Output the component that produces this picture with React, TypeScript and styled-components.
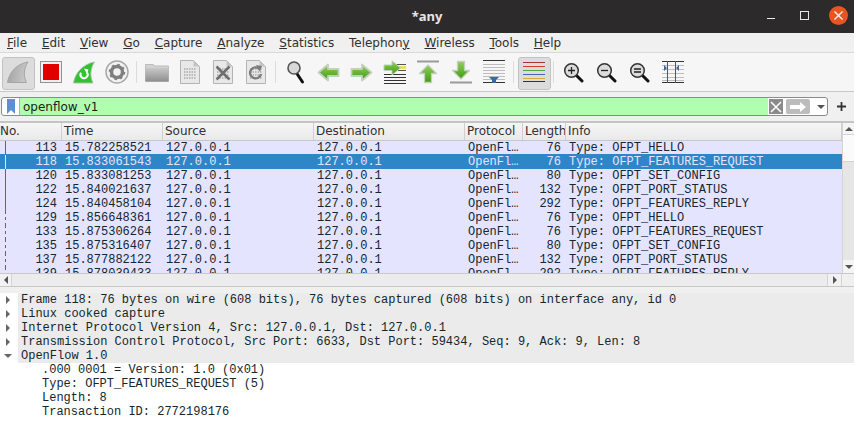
import React from "react";
import styled, { createGlobalStyle } from "styled-components";

const Global = createGlobalStyle`
  html, body { margin: 0; padding: 0; background: #fff; }
  * { box-sizing: border-box; }
`;

const UI = `"DejaVu Sans", sans-serif`;
const MONO = `"Liberation Mono", monospace`;
const COLS = "62px 101px 151px 151px 58px 43px 1fr";

const Win = styled.div`
  width: 854px; height: 441px; display: flex; flex-direction: column; overflow: hidden;
  font-family: ${UI}; color: #2e3436; background: #fff;
`;
const TitleBar = styled.div`
  height: 33px; flex: none; background: #2c2a2a; display: flex; align-items: center;
  justify-content: flex-end; padding: 0 5px 3px 0; gap: 13px; position: relative;
`;
const Title = styled.div`
  position: absolute; left: 0; right: 0; top: 7px; text-align: center;
  font: bold 13px "Noto Sans", "Open Sans", sans-serif; color: #e6e6e6;
`;
const WinBtn = styled.div`
  width: 21px; height: 21px; display: flex; align-items: center; justify-content: center;
`;
const MenuBar = styled.div`
  height: 20px; flex: none; background: #f0f0f0; border-bottom: 1px solid #d9d9d9;
  display: flex; padding: 0 0 0 7px; gap: 14.8px; align-items: center; font-size: 12px; color: #303030;
`;
const MenuItem = styled.span`white-space: nowrap;`;
const Mn = styled.span`text-decoration: underline;`;
const Toolbar = styled.div`
  height: 39px; flex: none; background: #f6f6f6; border-bottom: 1px solid #c8c8c8;
  display: flex; align-items: center; padding: 0 0 0 1px;
`;
const ToolBtn = styled.div<{ $on?: boolean }>`
  width: 33px; height: 33px; flex: none; display: flex; align-items: center; justify-content: center;
  position: relative;
  ${(p) => p.$on && `
    &::before { content: ""; position: absolute; left: 1px; top: 1px; width: 31px; height: 31px;
      background: #dcdcdc; border: 1px solid #c2c2c2; border-radius: 3px; }
  `}
  & > svg { position: relative; }
`;
const ToolSep = styled.div`
  width: 7px; height: 22px; flex: none; display: flex; justify-content: center;
  &::before { content: ""; width: 1px; background: #dcdcdc; }
`;
const FilterBar = styled.div`
  height: 29px; flex: none; background: #f0f0f0; display: flex; align-items: flex-start; padding: 5px 0 0 1px;
`;
const FilterBox = styled.div`
  width: 827px; height: 19px; flex: none; background: #fff; border: 1px solid #8a8a8a; border-radius: 3px;
  display: flex; align-items: stretch; overflow: hidden;
`;
const Bookmark = styled.div`
  width: 18px; flex: none; display: flex; align-items: center; justify-content: center; border-right: 1px solid #a9b9a9;
`;
const FilterText = styled.div`
  flex: 1; background: #afffaf; font: 12px ${UI}; color: #1c1c1c; line-height: 18px; padding-left: 3px;
`;
const ClearBtn = styled.div`
  width: 14px; height: 15px; margin: 1px 0 0 1px; background: #8b8b8b; flex: none;
  display: flex; align-items: center; justify-content: center;
`;
const ApplyBtn = styled.div`
  width: 24px; height: 15px; margin: 1px 0 0 3px; background: #bcbcbc; border-radius: 2px; flex: none;
  display: flex; align-items: center; justify-content: center;
`;
const DropBtn = styled.div`
  width: 17px; flex: none; display: flex; align-items: center; justify-content: flex-start; padding-left: 7px;
`;
const PlusBtn = styled.div`
  width: 26px; flex: none; height: 19px; display: flex; align-items: center; justify-content: center;
`;
const ListArea = styled.div`
  height: 166px; flex: none; border-top: 2px solid #c4c4c4; background: #f0f0f0; display: flex; flex-direction: column;
`;
const ListMain = styled.div`
  height: 150px; flex: none; display: flex;
`;
const ListCol = styled.div`width: 842px; flex: none; display: flex; flex-direction: column; overflow: hidden;`;
const Head = styled.div`
  height: 18px; flex: none; display: grid; grid-template-columns: ${COLS};
  background: linear-gradient(#f6f6f6, #e9e9e9); border-bottom: 1px solid #c8c8c8; font-size: 12px; color: #303030;
`;
const HeadCell = styled.div`
  padding-left: 2px; line-height: 17px; border-right: 1px solid #cfcfcf; white-space: nowrap; overflow: hidden;
  &:first-child { padding-left: 0; }
`;
const Rows = styled.div`flex: 1; overflow: hidden; background: #e4e4ff;`;
const Row = styled.div<{ $sel?: boolean; $dash?: boolean }>`
  height: 14px; display: grid; grid-template-columns: ${COLS}; position: relative;
  font: 12px/14px ${MONO}; background: ${(p) => (p.$sel ? "#2e86c8" : "#e4e4ff")}; color: ${(p) => (p.$sel ? "#e4e4ff" : "#12272e")};
  ${(p) => p.$sel && "box-shadow: 0 -1px 0 #2e86c8;"}
  &::before { content: ""; position: absolute; left: 5px; top: 0; bottom: 0; width: 1px;
    ${(p) => p.$dash
      ? "background: repeating-linear-gradient(#666 0 3px, transparent 3px 6px);"
      : `background: ${p.$sel ? "#e4e4ff" : "#666"};`} }
`;
const Cell = styled.div<{ $right?: boolean }>`
  padding: 0 ${(p) => (p.$right ? "5px" : "0")} 0 ${(p) => (p.$right ? "0" : "3px")};
  text-align: ${(p) => (p.$right ? "right" : "left")}; white-space: nowrap; overflow: hidden; text-overflow: ellipsis;
`;
const VScroll = styled.div`
  width: 12px; flex: none; background: #e6e6e6; display: flex; flex-direction: column; border-left: 1px solid #d4d4d4;
`;
const ScrollCap = styled.div<{ $h: number }>`
  height: ${(p) => p.$h}px; flex: none; background: #f4f4f4; display: flex; align-items: center; justify-content: center;
`;
const VThumb = styled.div`
  height: 28px; flex: none; background: #fafafa; border-top: 1px solid #d4d4d4; border-bottom: 1px solid #d4d4d4;
`;
const VTrack = styled.div`flex: 1;`;
const HScroll = styled.div`
  height: 14px; flex: none; display: flex; background: linear-gradient(#f8f8f8, #ececec);
  border-top: 1px solid #c8c8c8; border-bottom: 1px solid #c8c8c8;
`;
const HCap = styled.div`
  width: 12px; flex: none; display: flex; align-items: center; justify-content: center; background: #f2f2f2;
  border-right: 1px solid #d4d4d4;
`;
const HTrack = styled.div`flex: 1; background: #ececec; border-right: 1px solid #d4d4d4;`;
const HEnd = styled.div`
  width: 14px; flex: none; display: flex; align-items: center; justify-content: center; background: #f2f2f2;
  border-right: 1px solid #d4d4d4;
`;
const HCorner = styled.div`width: 12px; flex: none; background: #f0f0f0;`;
const Gap = styled.div`height: 6px; flex: none; background: #f0f0f0;`;
const Details = styled.div`
  flex: 1; background: #fff; font: 12px/14px ${MONO}; color: #12272e;
`;
const Node = styled.div`
  height: 14px; display: flex; white-space: pre;
`;
const Arrow = styled.div`width: 18px; flex: none; display: flex; align-items: center; justify-content: flex-start; padding-left: 4px;`;
const NodeText = styled.div`flex: 1; background: #ebebeb; padding-left: 3px;`;
const Leaf = styled.div`height: 14px; padding-left: 42px; white-space: pre;`;

const Svg: React.FC<{ s?: number; children: React.ReactNode }> = ({ s = 24, children }) => (
  <svg width={s} height={s} viewBox="0 0 24 24" fill="none">{children}</svg>
);

const Defs = () => (
  <svg width="0" height="0" style={{ position: "absolute" }}>
    <defs>
      <linearGradient id="g" x1="0" y1="0" x2="0" y2="1">
        <stop offset="0" stopColor="#8fd05a" />
        <stop offset="1" stopColor="#3f9a16" />
      </linearGradient>
      <linearGradient id="fin" x1="0" y1="0" x2="1" y2="0.2">
        <stop offset="0" stopColor="#a0a0a0" />
        <stop offset="1" stopColor="#c8c8c8" />
      </linearGradient>
      <linearGradient id="fold" x1="0" y1="0" x2="0" y2="1">
        <stop offset="0" stopColor="#c8c8c8" />
        <stop offset="1" stopColor="#8f8f8f" />
      </linearGradient>
    </defs>
  </svg>
);

const Fin = () => (
  <Svg s={24}><path d="M1.500 22.500C3 13 10 4 22 2c-4 6-5 14-1.500 20.500z" fill="url(#fin)" stroke="#a6a6a6" /></Svg>
);
const Stop = () => (
  <svg width="22" height="22" viewBox="0 0 22 22"><rect x=".5" y=".5" width="21" height="21" fill="#f2f2f2" stroke="#9a8f8f" /><rect x="3" y="3" width="16" height="16" fill="#e00000" /></svg>
);
const Restart = () => (
  <Svg s={24}>
    <path d="M1.500 23C3 13 11 4 22.500 2c-4 6-5 14-1.500 21z" fill="#2fc42f" stroke="#b0bdb0" />
    <path d="M15 12.500a3.600 3.600 0 1 1-6 .2" stroke="#fff" strokeWidth="2" />
    <path d="M12 8.500l4.500 1-1.500 4.500z" fill="#fff" />
  </Svg>
);
const Gear = () => (
  <Svg s={24}>
    <circle cx="12" cy="12" r="11" fill="#f2f2f2" stroke="#a8a8a8" strokeWidth="1.500" />
    <circle cx="12" cy="12" r="5.500" stroke="#7f7f7f" strokeWidth="3.500" />
    <circle cx="12" cy="12" r="7.500" stroke="#7f7f7f" strokeWidth="1.500" strokeDasharray="2.500 3.400" />
  </Svg>
);
const Folder = () => (
  <svg width="24" height="20" viewBox="0 0 24 20">
    <path d="M.5 2.500h8l1.500 1.500h13.500v15.500H.5z" fill="#d2d2d2" stroke="#bcbcbc" />
    <rect x=".5" y="6" width="23" height="13.500" fill="url(#fold)" />
  </svg>
);
const Sheet: React.FC<{ children?: React.ReactNode; dots?: boolean }> = ({ children, dots = true }) => (
  <svg width="20" height="24" viewBox="0 0 20 24">
    <path d="M.5.500h13l6 6v17H.5z" fill="#e8e8e8" stroke="#b4b4b4" />
    <path d="M13.500.500v6h6z" fill="#c4c4c4" />
    {dots && [9, 12, 15, 18].map((y) => <path key={y} d={`M4 ${y}h12`} stroke="#a9a9a9" strokeWidth="1.500" strokeDasharray="1.500 1" />)}
    {children}
  </svg>
);
const CloseFile = () => (
  <Sheet><path d="M3.500 6.500l13 13M16.500 6.500l-13 13" stroke="#6e6e6e" strokeWidth="2.600" /></Sheet>
);
const ReloadFile = () => (
  <Sheet>
    <path d="M13.500 9a5.500 5.500 0 1 0 1.500 5" stroke="#7c7c7c" strokeWidth="2.400" fill="none" />
    <path d="M10 5l6 1-2 6z" fill="#7c7c7c" />
  </Sheet>
);
const Lens: React.FC<{ mark?: "plus" | "minus" | "eq" }> = ({ mark }) => (
  <svg width="21" height="21" viewBox="0 0 21 21">
    <path d="M12.500 12.500l6.500 6.500" stroke="#111" strokeWidth="3" strokeLinecap="round" />
    <circle cx="8.500" cy="8.500" r="6.800" fill="#dcdcdc" stroke="#333" strokeWidth="1.500" />
    {mark === "plus" && <path d="M5 8.500h7M8.500 5v7" stroke="#222" strokeWidth="1.300" />}
    {mark === "minus" && <path d="M5 8.500h7" stroke="#222" strokeWidth="1.300" />}
    {mark === "eq" && <path d="M5 7h7M5 10h7" stroke="#222" strokeWidth="1.300" />}
  </svg>
);
const Find = () => (
  <svg width="18" height="24" viewBox="0 0 18 24">
    <path d="M9.500 13l6 9" stroke="#111" strokeWidth="3" strokeLinecap="round" />
    <circle cx="7" cy="8" r="6" fill="#d8d8d8" stroke="#555" strokeWidth="1.600" />
  </svg>
);
const ARROW = "M1.500 9.500L11 1.500v4.500h10.500v7H11v4.500z";
const GreenLeft = () => (
  <svg width="23" height="19" viewBox="0 0 23 19"><path d={ARROW} fill="url(#g)" stroke="#c5cfbd" strokeWidth="1.800" strokeLinejoin="round" /></svg>
);
const GreenRight = () => (
  <svg width="23" height="19" viewBox="0 0 23 19"><path d={ARROW} transform="matrix(-1 0 0 1 23 0)" fill="url(#g)" stroke="#c5cfbd" strokeWidth="1.800" strokeLinejoin="round" /></svg>
);
const Goto = () => (
  <svg width="24" height="24" viewBox="0 0 24 24">
    {[4, 10].map((y) => <path key={y} d={`M10 ${y}.5h13`} stroke="#555" />)}
    <path d="M14 7.500h9" stroke="#eedd66" strokeWidth="3" />
    {[14, 17, 20, 23].map((y) => <path key={y} d={`M1 ${y}.5h22`} stroke="#333" />)}
    <path d="M1 5h8V.8L17.500 8 9 15v-4.500H1z" fill="url(#g)" stroke="#c5cfbd" />
  </svg>
);
const UpArrow = () => (
  <svg width="22" height="24" viewBox="0 0 22 24">
    <path d="M0 1.500h22" stroke="#9a9a9a" strokeWidth="2" />
    <path d="M11 5l8.500 8.500h-5v9h-7v-9h-5z" fill="url(#g)" stroke="#c5cfbd" strokeWidth="1.300" strokeLinejoin="round" />
  </svg>
);
const DownArrow = () => (
  <svg width="22" height="24" viewBox="0 0 22 24">
    <path d="M7.500 1.500h7v9h5L11 19l-8.500-8.500h5z" fill="url(#g)" stroke="#c5cfbd" strokeWidth="1.300" strokeLinejoin="round" />
    <path d="M0 22.500h22" stroke="#9a9a9a" strokeWidth="2" />
  </svg>
);
const AutoScroll = () => (
  <svg width="22" height="24" viewBox="0 0 22 24">
    <path d="M0 .5h22M0 22.500h22" stroke="#333" />
    {[4, 7, 10, 13, 16, 19].map((y) => <path key={y} d={`M0 ${y}.5h22`} stroke="#bdbdbd" />)}
    <path d="M6 17h10l-3 3v3h-4v-3z" fill="#3a67a8" />
  </svg>
);
const Colorize = () => (
  <svg width="22" height="22" viewBox="0 0 22 22">
    <path d="M0 1.500h22" stroke="#a33" />
    <path d="M0 5.500h22" stroke="#d83a3a" />
    <path d="M0 9.500h22" stroke="#4fa845" />
    <path d="M0 13.500h22" stroke="#4a62c4" />
    <path d="M0 17.500h22" stroke="#d6b030" />
    <path d="M0 20.500h22" stroke="#333" />
  </svg>
);
const Resize = () => (
  <svg width="22" height="22" viewBox="0 0 22 22">
    <path d="M0 .5h22M0 21.500h22" stroke="#333" />
    {[4, 8, 12, 16, 19].map((y) => <path key={y} d={`M0 ${y}.5h22`} stroke="#bdbdbd" />)}
    <path d="M5.500 0v22M13.500 0v22" stroke="#555" />
    <path d="M2 4l3 3-3 3zM17 4l-3 3 3 3z" fill="#3a67a8" />
  </svg>
);
const Tri: React.FC<{ d: "up" | "down" | "left" | "right"; c?: string }> = ({ d, c = "#555" }) => {
  const pts = { up: "0,6 8,6 4,2", down: "0,2 8,2 4,6", left: "6,0 6,8 2,4", right: "2,0 2,8 6,4" }[d];
  return <svg width={8} height={8} viewBox="0 0 8 8"><polygon points={pts} fill={c} /></svg>;
};

const packets: [string, string, string, string][] = [
  ["113", "15.782258521", "76", "OFPT_HELLO"],
  ["118", "15.833061543", "76", "OFPT_FEATURES_REQUEST"],
  ["120", "15.833081253", "80", "OFPT_SET_CONFIG"],
  ["122", "15.840021637", "132", "OFPT_PORT_STATUS"],
  ["124", "15.840458104", "292", "OFPT_FEATURES_REPLY"],
  ["129", "15.856648361", "76", "OFPT_HELLO"],
  ["133", "15.875306264", "76", "OFPT_FEATURES_REQUEST"],
  ["135", "15.875316407", "80", "OFPT_SET_CONFIG"],
  ["137", "15.877882122", "132", "OFPT_PORT_STATUS"],
  ["139", "15.878039433", "292", "OFPT_FEATURES_REPLY"],
];
const menus: [string, string, string][] = [
  ["", "F", "ile"], ["", "E", "dit"], ["", "V", "iew"], ["", "G", "o"], ["", "C", "apture"], ["", "A", "nalyze"],
  ["", "S", "tatistics"], ["Telephon", "y", ""], ["", "W", "ireless"], ["", "T", "ools"], ["", "H", "elp"],
];
const nodes: [string, boolean][] = [
  ["Frame 118: 76 bytes on wire (608 bits), 76 bytes captured (608 bits) on interface any, id 0", false],
  ["Linux cooked capture", false],
  ["Internet Protocol Version 4, Src: 127.0.0.1, Dst: 127.0.0.1", false],
  ["Transmission Control Protocol, Src Port: 6633, Dst Port: 59434, Seq: 9, Ack: 9, Len: 8", false],
  ["OpenFlow 1.0", true],
];
const leaves = [".000 0001 = Version: 1.0 (0x01)", "Type: OFPT_FEATURES_REQUEST (5)", "Length: 8", "Transaction ID: 2772198176"];

export default function App() {
  return (
    <Win>
      <Global />
      <Defs />
      <TitleBar>
        <Title>*any</Title>
        <WinBtn><svg width="10" height="10" viewBox="0 0 10 10"><path d="M1 8.500h8" stroke="#e8e8e8" strokeWidth="1" /></svg></WinBtn>
        <WinBtn><svg width="11" height="11" viewBox="0 0 11 11"><rect x="1.500" y="1.500" width="8" height="8" stroke="#e8e8e8" fill="none" /></svg></WinBtn>
        <WinBtn>
          <svg width="19" height="19" viewBox="0 0 19 19">
            <circle cx="9.500" cy="9.500" r="9.500" fill="#e95420" />
            <path d="M5.500 5.500l8 8M13.500 5.500l-8 8" stroke="#f6f6f6" strokeWidth="1.300" />
          </svg>
        </WinBtn>
      </TitleBar>
      <MenuBar>
        {menus.map(([a, m, b]) => (
          <MenuItem key={a + m + b}>{a}<Mn>{m}</Mn>{b}</MenuItem>
        ))}
      </MenuBar>
      <Toolbar>
        <ToolBtn $on><Fin /></ToolBtn>
        <ToolBtn><Stop /></ToolBtn>
        <ToolBtn><Restart /></ToolBtn>
        <ToolBtn><Gear /></ToolBtn>
        <ToolSep />
        <ToolBtn><Folder /></ToolBtn>
        <ToolBtn><Sheet /></ToolBtn>
        <ToolBtn><CloseFile /></ToolBtn>
        <ToolBtn><ReloadFile /></ToolBtn>
        <ToolSep />
        <ToolBtn><Find /></ToolBtn>
        <ToolBtn><GreenLeft /></ToolBtn>
        <ToolBtn><GreenRight /></ToolBtn>
        <ToolBtn><Goto /></ToolBtn>
        <ToolBtn><UpArrow /></ToolBtn>
        <ToolBtn><DownArrow /></ToolBtn>
        <ToolBtn><AutoScroll /></ToolBtn>
        <ToolSep />
        <ToolBtn $on><Colorize /></ToolBtn>
        <ToolSep />
        <ToolBtn><Lens mark="plus" /></ToolBtn>
        <ToolBtn><Lens mark="minus" /></ToolBtn>
        <ToolBtn><Lens mark="eq" /></ToolBtn>
        <ToolBtn><Resize /></ToolBtn>
      </Toolbar>
      <FilterBar>
        <FilterBox>
          <Bookmark>
            <svg width="10" height="15" viewBox="0 0 10 15"><path d="M1 0h8v15L5 11l-4 4z" fill="#5b8fd6" /></svg>
          </Bookmark>
          <FilterText>openflow_v1</FilterText>
          <ClearBtn>
            <svg width="12" height="12" viewBox="0 0 12 12"><path d="M1 1l10 10M11 1L1 11" stroke="#fff" strokeWidth="1.500" /></svg>
          </ClearBtn>
          <ApplyBtn>
            <svg width="18" height="10" viewBox="0 0 18 10"><path d="M1 3h10V0l6 5-6 5V7H1z" fill="#fff" /></svg>
          </ApplyBtn>
          <DropBtn><Tri d="down" /></DropBtn>
        </FilterBox>
        <PlusBtn>
          <svg width="9" height="9" viewBox="0 0 9 9"><path d="M0 4.500h9M4.500 0v9" stroke="#333" strokeWidth="1.800" /></svg>
        </PlusBtn>
      </FilterBar>
      <ListArea>
        <ListMain>
          <ListCol>
            <Head>
              {["No.", "Time", "Source", "Destination", "Protocol", "Length", "Info"].map((h) => (
                <HeadCell key={h}>{h}</HeadCell>
              ))}
            </Head>
            <Rows>
              {packets.map(([no, t, len, info], i) => (
                <Row key={no} $sel={i === 1} $dash={i >= 5}>
                  <Cell $right>{no}</Cell>
                  <Cell>{t}</Cell>
                  <Cell>127.0.0.1</Cell>
                  <Cell>127.0.0.1</Cell>
                  <Cell>OpenFlow</Cell>
                  <Cell $right>{len}</Cell>
                  <Cell>Type: {info}</Cell>
                </Row>
              ))}
            </Rows>
          </ListCol>
          <VScroll>
            <ScrollCap $h={11}><Tri d="up" /></ScrollCap>
            <VThumb />
            <VTrack />
            <ScrollCap $h={13}><Tri d="down" /></ScrollCap>
          </VScroll>
        </ListMain>
        <HScroll>
          <HCap><Tri d="left" /></HCap>
          <HTrack />
          <HEnd><Tri d="right" /></HEnd>
          <HCorner />
        </HScroll>
      </ListArea>
      <Gap />
      <Details>
        {nodes.map(([t, open]) => (
          <Node key={t}>
            <Arrow><Tri d={open ? "down" : "right"} c="#666" /></Arrow>
            <NodeText>{t}</NodeText>
          </Node>
        ))}
        {leaves.map((l) => <Leaf key={l}>{l}</Leaf>)}
      </Details>
    </Win>
  );
}
